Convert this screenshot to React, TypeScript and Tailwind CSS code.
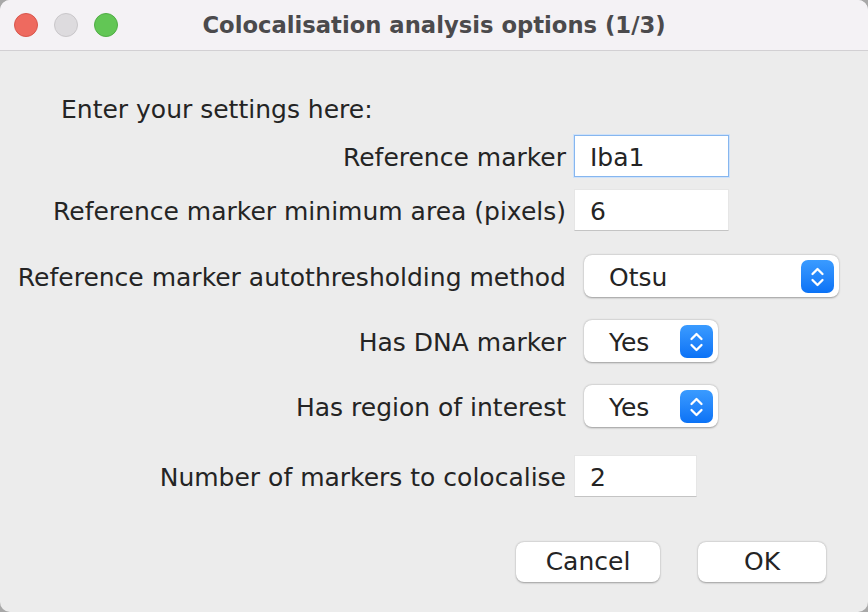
import type { ReactNode } from 'react'

const rows = [
  { label: 'Reference marker', kind: 'input', value: 'Iba1', focus: true, mt: 'mt-[13px]' },
  { label: 'Reference marker minimum area (pixels)', kind: 'input', value: '6', mt: 'mt-[12px]' },
  { label: 'Reference marker autothresholding method', kind: 'select', value: 'Otsu', wide: true, mt: 'mt-[24px]' },
  { label: 'Has DNA marker', kind: 'select', value: 'Yes', mt: 'mt-[23px]' },
  { label: 'Has region of interest', kind: 'select', value: 'Yes', mt: 'mt-[23px]' },
  { label: 'Number of markers to colocalise', kind: 'input', value: '2', short: true, mt: 'mt-[28px]' },
]

function Stepper() {
  return (
    <div className="w-[33px] h-[33px] rounded-[7px] bg-gradient-to-b from-[#3a9bff] to-[#0a72f6] flex items-center justify-center shrink-0">
      <svg width="33" height="33" viewBox="0 0 33 33" fill="none" stroke="white" strokeWidth="2.3" strokeLinecap="round" strokeLinejoin="round">
        <path d="M11.5 14 L16.5 9 L21.5 14" />
        <path d="M11.5 20 L16.5 25 L21.5 20" />
      </svg>
    </div>
  )
}

function Row({ label, children, mt }: { label: string; children: ReactNode; mt: string }) {
  return (
    <div className={`flex items-center h-[42px] ${mt}`}>
      <div className="w-[566px] text-right shrink-0 whitespace-nowrap pt-[3px]">{label}</div>
      {children}
    </div>
  )
}

export default function App() {
  return (
    <div className="w-[868px] h-[612px] bg-[#a8a8a8] font-['DejaVu_Sans',sans-serif] text-[25px] text-[#242424]">
      <div className="h-full rounded-[10px] overflow-hidden bg-[#ececec] flex flex-col">
        {/* title bar */}
        <div className="h-[51px] shrink-0 bg-[#f4f2f5] border-b border-[#d2d0d3] flex items-center">
          <div className="w-[130px] flex items-center gap-4 pl-[14px] shrink-0">
            <span className="w-6 h-6 rounded-full bg-[#ee6a5f] border border-[#d8564c]" />
            <span className="w-6 h-6 rounded-full bg-[#dddbde] border border-[#c9c7ca]" />
            <span className="w-6 h-6 rounded-full bg-[#62c655] border border-[#50ad45]" />
          </div>
          <div className="flex-1 text-center font-bold text-[22.7px] text-[#4b4a4c] whitespace-nowrap">Colocalisation analysis options (1/3)</div>
          <div className="w-[130px] shrink-0" />
        </div>

        {/* body */}
        <div className="flex flex-col">
          <div className="mt-[47px] h-6 flex items-center pl-[61px]">Enter your settings here:</div>

          {rows.map(r => (
            <Row key={r.label} label={r.label} mt={r.mt}>
              {r.kind === 'input' ? (
                <div
                  className={`ml-[8px] h-[42px] flex items-center pl-[15px] pt-[3px] bg-white ${r.short ? 'w-[123px]' : 'w-[155px]'} ${
                    r.focus
                      ? 'border border-[#86b6ef] shadow-[0_0_0_1px_#cfe2f9]'
                      : 'border border-[#e6e6e6] border-b-[#c4c4c4]'
                  }`}
                >
                  {r.value}
                </div>
              ) : (
                <div
                  className={`ml-[18px] h-[42px] rounded-[8px] bg-white shadow-[0_0.5px_2px_rgba(0,0,0,0.35)] flex items-center justify-between pl-[25px] pr-[5px] ${
                    r.wide ? 'w-[255px]' : 'w-[134px]'
                  }`}
                >
                  <span className="pt-[3px]">{r.value}</span>
                  <Stepper />
                </div>
              )}
            </Row>
          ))}

          <div className="mt-[45px] flex justify-end gap-[38px] pr-[42px]">
            <button className="w-[144px] h-[40px] rounded-[8px] bg-white shadow-[0_0.5px_2px_rgba(0,0,0,0.35)]">Cancel</button>
            <button className="w-[128px] h-[40px] rounded-[8px] bg-white shadow-[0_0.5px_2px_rgba(0,0,0,0.35)]">OK</button>
          </div>
        </div>
      </div>
    </div>
  )
}
